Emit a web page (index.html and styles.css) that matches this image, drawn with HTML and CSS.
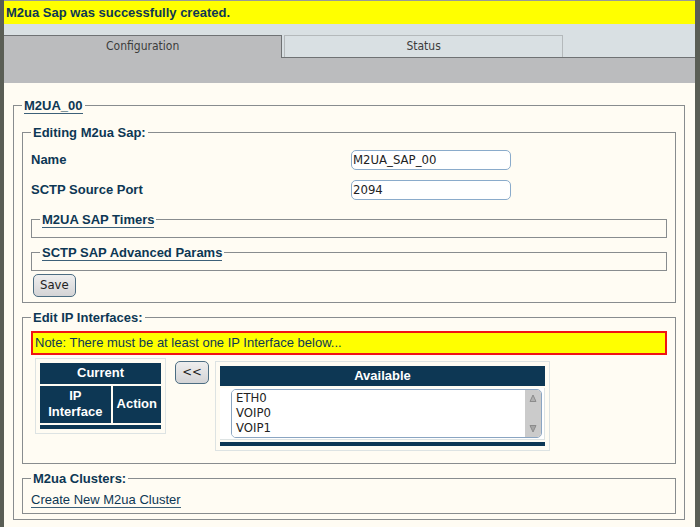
FILE: index.html
```
<!DOCTYPE html>
<html lang="en">
<head>
<meta charset="utf-8">
<title>M2ua Sap</title>
<link rel="stylesheet" href="styles.css">
</head>
<body>
<div class="page">
  <p class="flash">M2ua Sap was successfully created.</p>
  <nav class="tabs">
    <a class="tab tab-active" href="#configuration">Configuration</a>
    <a class="tab" href="#status">Status</a>
  </nav>
  <div class="subbar"></div>
  <main class="content">
    <fieldset class="outer">
      <legend><a href="#m2ua">M2UA_00</a></legend>

      <fieldset class="sap">
        <legend>Editing M2ua Sap:</legend>
        <form>
          <div class="field">
            <label for="name">Name</label>
            <input id="name" type="text" value="M2UA_SAP_00">
          </div>
          <div class="field">
            <label for="port">SCTP Source Port</label>
            <input id="port" type="text" value="2094">
          </div>
          <fieldset class="collapsed">
            <legend><a href="#timers">M2UA SAP Timers</a></legend>
          </fieldset>
          <fieldset class="collapsed">
            <legend><a href="#params">SCTP SAP Advanced Params</a></legend>
          </fieldset>
          <button class="save" type="button">Save</button>
        </form>
      </fieldset>

      <fieldset class="interfaces">
        <legend>Edit IP Interfaces:</legend>
        <p class="note">Note: There must be at least one IP Interface below...</p>
        <div class="transfer">
          <table class="grid current">
            <thead>
              <tr><th colspan="2">Current</th></tr>
              <tr><th>IP Interface</th><th>Action</th></tr>
            </thead>
            <tfoot><tr><td class="bar" colspan="2"></td></tr></tfoot>
          </table>
          <button class="move" type="button">&lt;&lt;</button>
          <table class="grid available">
            <thead>
              <tr><th><label for="available">Available</label></th></tr>
            </thead>
            <tbody>
              <tr><td class="list">
                <div class="listbox">
                  <select id="available" multiple size="3">
                    <option>ETH0</option>
                    <option>VOIP0</option>
                    <option>VOIP1</option>
                  </select>
                  <div class="scroll" aria-hidden="true">
                    <svg width="8" height="8" viewBox="0 0 8 8"><path d="M4 1 L7 7.500 H1 Z" fill="#b0b0b0" stroke="#8c8c8c"/></svg>
                    <svg width="8" height="8" viewBox="0 0 8 8"><path d="M1 .5 H7 L4 7 Z" fill="#a6a6a6" stroke="#8c8c8c"/></svg>
                  </div>
                </div>
              </td></tr>
            </tbody>
            <tfoot><tr><td class="bar"></td></tr></tfoot>
          </table>
        </div>
      </fieldset>

      <fieldset class="clusters">
        <legend>M2ua Clusters:</legend>
        <a href="#new-cluster">Create New M2ua Cluster</a>
      </fieldset>
    </fieldset>
  </main>
</div>
</body>
</html>
```
FILE: styles.css
```
* { box-sizing: border-box; }

body {
  margin: 0;
  background: #5a5e55;
  color: #0d3754;
  font: 13px/16px "Liberation Sans", Arial, sans-serif;
}

.page {
  min-height: 100vh;
  margin: 0 5px 0 4px;
  background: #fffcf3;
}

.flash {
  margin: 0;
  padding: 4px 2px 3px;
  border-top: 1px solid #999b96;
  background: #ff0;
  font-weight: bold;
}

.tabs {
  display: flex;
  gap: 2px;
  padding-top: 11px;
  border-bottom: 1px solid #6f7274;
  background: #d9e0e3;
}

.tab {
  flex: 0 0 calc(40% + 2px);
  height: 22px;
  padding-top: 2px;
  border: 1px solid #b4b9bb;
  border-bottom: 0;
  color: #3c3c3c;
  font: 12px/16px "DejaVu Sans Condensed", "DejaVu Sans", sans-serif;
  text-align: center;
  text-decoration: none;
}

.tab-active {
  height: 23px;
  margin-bottom: -1px;
  border-color: #6f7274;
  border-left: 0;
  background: #bbbcbe;
}

.subbar {
  height: 25px;
  background: #bbbcbe;
}

.content { padding: 13px 10px 6px 9px; }

fieldset {
  min-width: 0;
  margin: 0;
  padding: 0 8px;
  border: 1px solid #888c8e;
}

legend {
  padding: 2px 2px 0;
  font-weight: bold;
}

.content a {
  border-bottom: 1px solid #3c6079;
  color: #0d3754;
  text-decoration: none;
}

.outer { padding-bottom: 5px; }

.sap { margin-top: 9px; padding-bottom: 5px; }

.field {
  display: grid;
  grid-template-columns: 1fr 1fr;
  column-gap: 4px;
  align-items: center;
  height: 30px;
}

.field:first-child { margin-top: 4px; }
.field label { font-weight: bold; }

input {
  width: 160px;
  height: 20px;
  padding: 0 1px 2px;
  border: 1px solid #8aabcb;
  border-radius: 5px;
  background: #fff;
  color: #222;
  font: 13px/16px "DejaVu Sans Condensed", "DejaVu Sans", sans-serif;
}

.collapsed {
  height: 28px;
  margin-top: 5px;
}

button {
  height: 23px;
  padding: 0 6px 2px;
  border: 1px solid #4c6d82;
  border-radius: 5px;
  background: linear-gradient(#eee, #d4d4d6);
  color: #222;
  font: 13px/16px "DejaVu Sans Condensed", "DejaVu Sans", sans-serif;
}

.save {
  display: block;
  margin: 3px 0 0 2px;
}

.interfaces { margin-top: 5px; padding-bottom: 12px; }

.note {
  margin: 5px 0 3px;
  padding: 2px;
  border: 2px solid #f01414;
  background: #ff0;
  line-height: 16px;
}

.transfer {
  display: flex;
  align-items: flex-start;
  padding-left: 4px;
}

.grid {
  padding: 2px;
  border: 1px solid #dde3e3;
  border-spacing: 2px;
}

.grid th {
  padding: 2px 4px;
  background: #0d3754;
  color: #fff;
  line-height: 16px;
}

.grid .bar {
  height: 4px;
  padding: 0;
  background: #0d3754;
}

.current {
  width: 131px;
  height: 76px;
}

.move {
  width: 34px;
  margin: 3px 6px 0 9px;
}

.available {
  width: 335px;
  margin-top: 3px;
}

.grid .list {
  padding: 1px 2px 1px 11px;
  border-right: 1px solid #dde3e3;
  border-bottom: 1px solid #dde3e3;
  background: #fff;
}

.listbox {
  display: flex;
  height: 49px;
  overflow: hidden;
  border: 1px solid #8aa5c2;
  border-radius: 5px;
  background: #fff;
}

select {
  flex: 1;
  min-width: 0;
  padding: 0;
  overflow: hidden;
  border: 0;
  background: #fff;
  color: #222;
  font: 13px/15px "DejaVu Sans Condensed", "DejaVu Sans", sans-serif;
}

option {
  height: 15px;
  min-height: 15px;
  padding: 0 4px;
}

.scroll {
  display: flex;
  flex: 0 0 16px;
  flex-direction: column;
  align-items: center;
  justify-content: space-between;
  padding: 4px 0;
  background: #cbcbcb;
}

.clusters { margin-top: 5px; padding-bottom: 5px; }
.clusters > a { display: inline-block; margin-top: 5px; line-height: 15px; }
```
